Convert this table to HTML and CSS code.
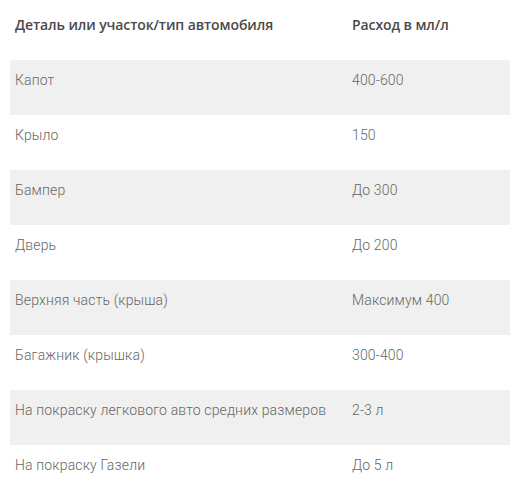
FILE: index.html
```html
<!DOCTYPE html>
<html lang="ru">
<head>
<meta charset="utf-8">
<link rel="stylesheet" href="styles.css">
</head>
<body>
<div class="table">
  <div class="row head">
    <div class="c1">Деталь или участок/тип автомобиля</div>
    <div class="c2">Расход в мл/л</div>
  </div>
  <div class="row alt"><div class="c1">Капот</div><div class="c2">400-600</div></div>
  <div class="row"><div class="c1">Крыло</div><div class="c2">150</div></div>
  <div class="row alt"><div class="c1">Бампер</div><div class="c2">До 300</div></div>
  <div class="row"><div class="c1">Дверь</div><div class="c2">До 200</div></div>
  <div class="row alt"><div class="c1">Верхняя часть (крыша)</div><div class="c2">Максимум 400</div></div>
  <div class="row"><div class="c1">Багажник (крышка)</div><div class="c2">300-400</div></div>
  <div class="row alt"><div class="c1">На покраску легкового авто средних размеров</div><div class="c2">2-3 л</div></div>
  <div class="row"><div class="c1">На покраску Газели</div><div class="c2">До 5 л</div></div>
</div>
</body>
</html>
```
FILE: styles.css
```css
html, body {
  margin: 0;
  padding: 0;
  background: #ffffff;
}
body {
  font-family: Roboto, "Open Sans", sans-serif;
  font-weight: 300;
  font-size: 14px;
  line-height: 20px;
  letter-spacing: 0.15px;
  color: #666666;
  overflow: hidden;
}
.table {
  margin-left: 10px;
  display: flex;
  flex-direction: column;
}
.row {
  display: flex;
  height: 55px;
  box-sizing: border-box;
  padding-top: 10px;
}
.row.alt {
  background: #f0f0f0;
}
.row.head {
  height: 60px;
  padding-top: 15px;
  font-family: "Open Sans", sans-serif;
  font-weight: 600;
  letter-spacing: -0.1px;
  color: #4a4a4a;
}
.c1 {
  width: 332px;
  padding-left: 5px;
}
.c2 {
  padding-left: 5px;
}
```
